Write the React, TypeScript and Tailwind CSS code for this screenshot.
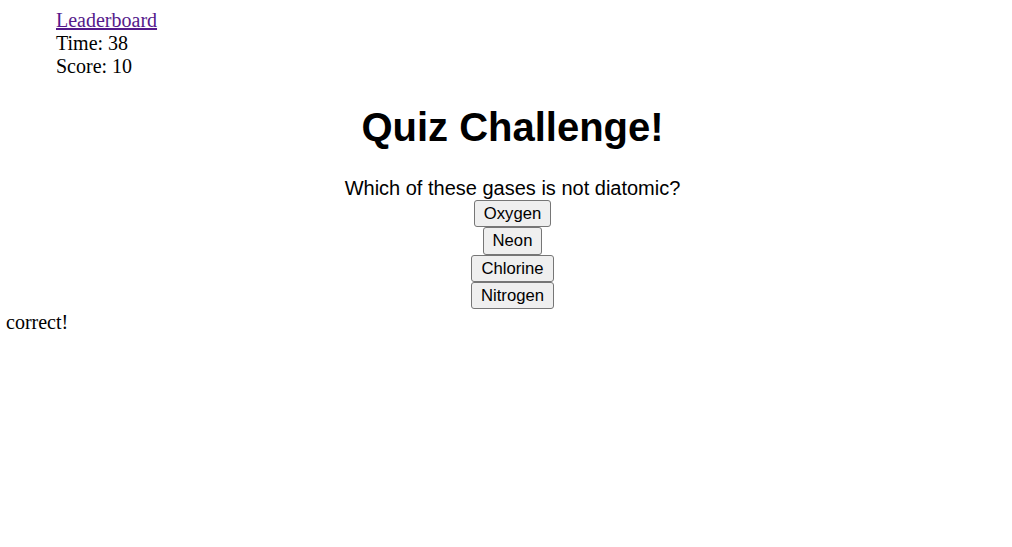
import React from "react";

const answers = ["Oxygen", "Neon", "Chlorine", "Nitrogen"];

export default function App() {
  return (
    <div className="min-h-[547px] w-full bg-white text-black">
      <div
        className="pl-[56px] pt-[9px] text-[20px] leading-[23px]"
        style={{ fontFamily: '"Liberation Serif", "Times New Roman", serif' }}
      >
        <div>
          <a href="#" className="text-[#551a8b] underline">
            Leaderboard
          </a>
        </div>
        <div>Time: 38</div>
        <div>Score: 10</div>
      </div>
      <div
        className="flex flex-col items-center pl-[13px]"
        style={{ fontFamily: '"Liberation Sans", Arial, sans-serif' }}
      >
        <h1 className="mt-[26px] text-[40px] font-bold leading-[46px]">Quiz Challenge!</h1>
        <p className="mt-[26px] text-[20px] leading-[24px]">Which of these gases is not diatomic?</p>
        <div className="flex flex-col items-center">
          {answers.map((a) => (
            <button
              key={a}
              className="flex h-[27.25px] items-center rounded-[3px] border border-[#767676] bg-[#efefef] px-[9px] text-[16.67px] leading-[19px] text-black"
            >
              {a}
            </button>
          ))}
        </div>
      </div>
      <div
        className="mt-[2px] pl-[6px] text-[20px] leading-[23px]"
        style={{ fontFamily: '"Liberation Serif", "Times New Roman", serif' }}
      >
        correct!
      </div>
    </div>
  );
}
